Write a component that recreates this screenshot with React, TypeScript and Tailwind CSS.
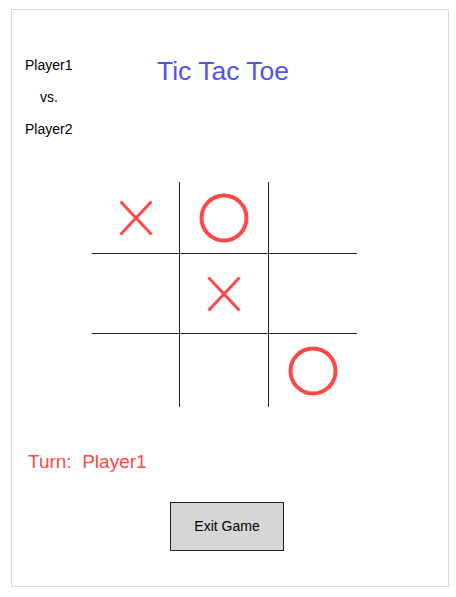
const board: ('X' | 'O' | '')[] = ['X', 'O', '', '', 'X', '', '', '', 'O']

const colWidths = ['w-[88px]', 'w-[89px]', 'w-[88px]']
const rowHeights = ['h-[72px]', 'h-[80px]', 'h-[73px]']

function Cross() {
	return (
		<svg width="34" height="36" viewBox="0 0 34 36">
			<line x1="1.5" y1="1.5" x2="32.5" y2="34.5" stroke="#ff4848" strokeWidth="3" />
			<line x1="32.5" y1="1.5" x2="1.5" y2="34.5" stroke="#ff4848" strokeWidth="3" />
		</svg>
	)
}

function Circle() {
	return (
		<svg width="50" height="50" viewBox="0 0 50 50">
			<circle cx="25" cy="25" r="22.5" fill="none" stroke="#ff4848" strokeWidth="4" />
		</svg>
	)
}

export default function App() {
	return (
		<div className="min-h-screen bg-white pt-[9px] font-['Liberation_Sans',Arial,sans-serif]">
			<div className="ml-[11px] w-[438px] h-[578px] border border-[#d9d9d9] flex flex-col">
				{/* Header */}
				<div className="flex pt-[47px] pl-[13px]">
					<div className="w-[132px] flex flex-col gap-[16px] text-[14px] leading-[16px] text-black">
						<span>Player1</span>
						<span className="pl-[15px]">vs.</span>
						<span>Player2</span>
					</div>
					<h1 className="text-[26.5px] leading-[28px] text-[#5252f2]">Tic Tac Toe</h1>
				</div>

				{/* Board */}
				<div className="mt-[45px] ml-[80px] flex flex-col">
					{[0, 1, 2].map((r) => (
						<div key={r} className="flex">
							{[0, 1, 2].map((c) => {
								const v = board[r * 3 + c]
								return (
									<div
										key={c}
										className={`${colWidths[c]} ${rowHeights[r]} flex items-center justify-center border-[#222] ${c < 2 ? 'border-r' : ''} ${r < 2 ? 'border-b' : ''}`}
									>
										{v === 'X' && <Cross />}
										{v === 'O' && <Circle />}
									</div>
								)
							})}
						</div>
					))}
				</div>

				{/* Turn */}
				<div className="mt-[44px] ml-[16px] text-[19px] leading-[22px] text-[#ff4848] whitespace-pre">
					Turn:  Player1
				</div>

				{/* Exit */}
				<button className="mt-[29px] ml-[158px] w-[114px] h-[49px] bg-[#d6d6d6] border border-[#222] text-[14px] text-black">
					Exit Game
				</button>
			</div>
		</div>
	)
}
